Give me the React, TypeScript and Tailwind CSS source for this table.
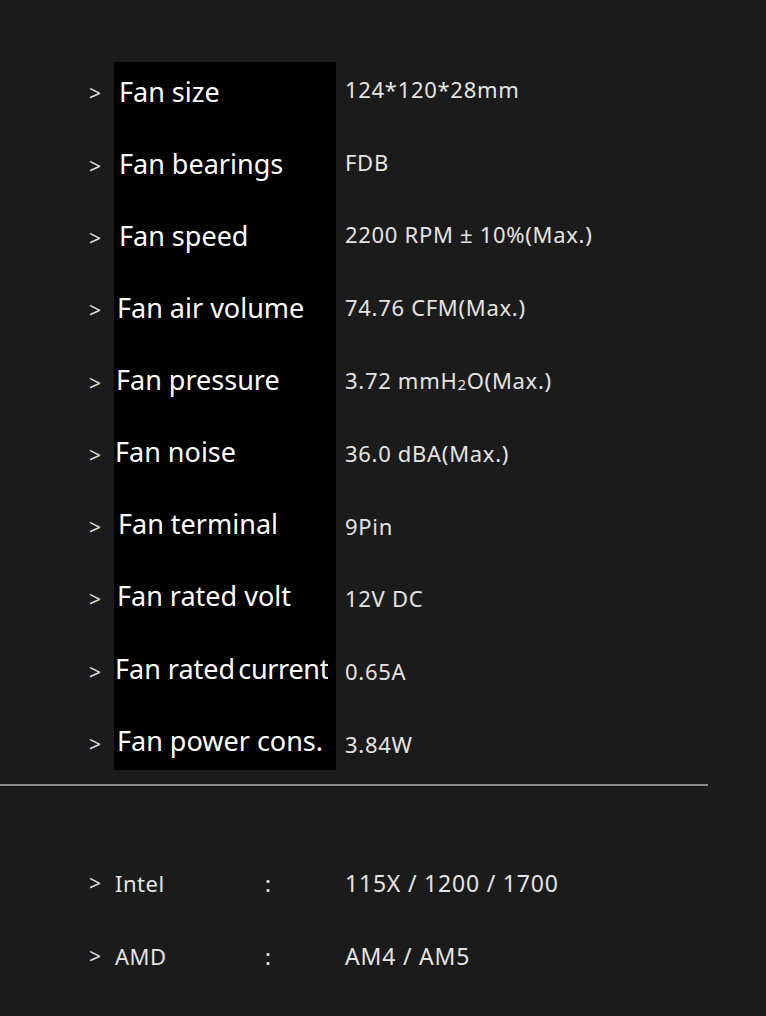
// 팬 스펙 시트 — 라벨(검정 패널) / 값 두 컬럼 + 소켓 호환 목록
const SPECS = [
  { label: "Fan size", value: "124*120*28mm", pad: "pl-[5px]" },
  { label: "Fan bearings", value: "FDB", pad: "pl-[5px]" },
  { label: "Fan speed", value: "2200 RPM ± 10%(Max.)", pad: "pl-[5px]" },
  { label: "Fan air volume", value: "74.76 CFM(Max.)", pad: "pl-[3px]" },
  { label: "Fan pressure", value: "h2o", pad: "pl-[2px]" },
  { label: "Fan noise", value: "36.0 dBA(Max.)", pad: "pl-[1px]" },
  { label: "Fan terminal", value: "9Pin", pad: "pl-[4px]" },
  { label: "Fan rated volt", value: "12V DC", pad: "pl-[3px]" },
  { label: "current", value: "0.65A", pad: "pl-[1px]" },
  { label: "Fan power cons.", value: "3.84W", pad: "pl-[3px]" },
];

const SOCKETS = [
  { name: "Intel", value: "115X / 1200 / 1700" },
  { name: "AMD", value: "AM4 / AM5" },
];

function Value({ v }: { v: string }) {
  if (v === "h2o")
    return (
      <>
        3.72 mmH<sub className="text-[15px] relative top-[1px] align-baseline">2</sub>O(Max.)
      </>
    );
  return <>{v}</>;
}

export default function App() {
  return (
    <div className="w-[766px] h-[1016px] bg-[#1b1b1b] overflow-hidden font-['Noto_Sans',sans-serif] text-[#e4e4e4]">
      <div className="flex">
        {/* 화살표 */}
        <div className="w-[114px] pl-[89px] pt-[58px] flex flex-col">
          {SPECS.map((s) => (
            <div key={s.label} className="h-[72.3px] flex items-center text-[21px] text-[#dcdcdc]">
              &gt;
            </div>
          ))}
        </div>

        {/* 라벨 패널 */}
        <div className="w-[222px] h-[708px] mt-[62px] bg-black">
          <div className="-mt-[6px] flex flex-col">
            {SPECS.map((s) =>
              s.label === "current" ? (
                <div
                  key={s.label}
                  className={`h-[72.1px] w-[214px] overflow-hidden flex items-center whitespace-nowrap text-[27px] text-white ${s.pad}`}
                >
                  Fan rated<span className="ml-[3px] tracking-[-0.3px]">current</span>
                </div>
              ) : (
                <div
                  key={s.label}
                  className={`h-[72.1px] flex items-center whitespace-nowrap text-[27px] text-white ${s.pad}`}
                >
                  {s.label}
                </div>
              )
            )}
          </div>
        </div>

        {/* 값 */}
        <div className="pl-[9px] pt-[53px] flex flex-col">
          {SPECS.map((s) => (
            <div
              key={s.label}
              className="h-[72.8px] flex items-center whitespace-nowrap text-[22px] tracking-[0.7px]"
            >
              <span>
                <Value v={s.value} />
              </span>
            </div>
          ))}
        </div>
      </div>

      <div className="mt-[3px] w-[708px] h-[2px] bg-[#8a8a8a]" />

      <div className="pt-[61px] flex flex-col">
        {SOCKETS.map((s) => (
          <div key={s.name} className="h-[73px] flex items-center whitespace-nowrap">
            <span className="w-[115px] pl-[89px] text-[21px] text-[#dcdcdc]">&gt;</span>
            <span className="w-[150px] text-[22px] tracking-[0.5px]">{s.name}</span>
            <span className="w-[80px] text-[22px]">:</span>
            <span className="text-[23px] tracking-[0.8px]">{s.value}</span>
          </div>
        ))}
      </div>
    </div>
  );
}
